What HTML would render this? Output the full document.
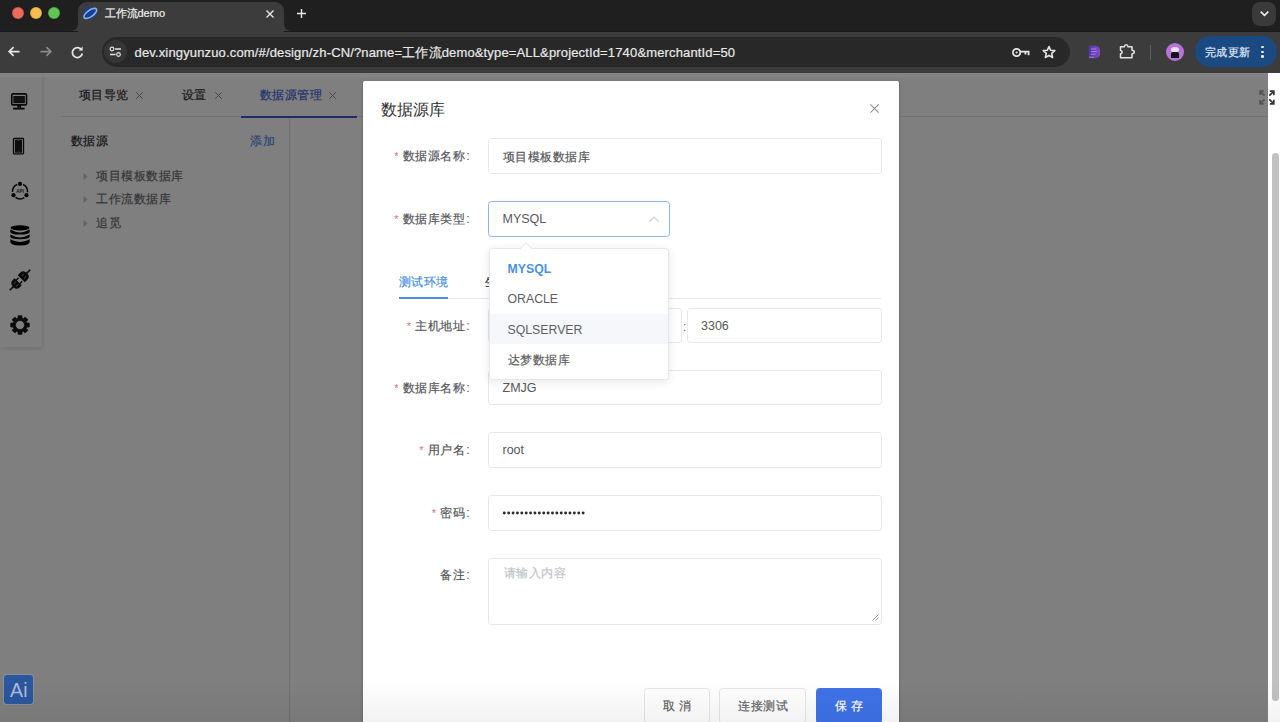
<!DOCTYPE html>
<html><head><meta charset="utf-8">
<style>
*{box-sizing:border-box;margin:0;padding:0}
html,body{width:1280px;height:722px;overflow:hidden;background:#fff;font-family:"Liberation Sans",sans-serif}
.abs{position:absolute}
.t{position:absolute;white-space:nowrap;line-height:1}
svg{position:absolute;overflow:visible}
#tabstrip{left:0;top:0;width:1280px;height:31px;background:#1f1f1f}
#toolbar{left:0;top:31px;width:1280px;height:42px;background:#3c3c3c;border-top:.5px solid #1a1a1a}
.tl{width:12px;height:12px;border-radius:50%;top:7.3px;box-shadow:inset 0 0 0 .6px rgba(0,0,0,.25)}
#tab{left:78px;top:1.5px;width:206px;height:31px;background:#3c3c3c;border-radius:9px 9px 0 0}
#omni{left:102px;top:37px;width:968px;height:30px;border-radius:15px;background:#282828}
#page{left:0;top:73px;width:1280px;height:649px;background:#fff;overflow:hidden}
#overlay{left:0;top:73px;width:1268px;height:649px;background:rgba(0,0,0,.5)}
.lbl{position:absolute;left:0;width:106.7px;text-align:right;white-space:nowrap;line-height:1;font-size:12.4px;color:#55575c}
.lbl i{font-style:normal;color:#d9707a;font-size:11px;margin-right:4.3px;vertical-align:top;position:relative;top:1px}
b{font-weight:normal;letter-spacing:.5px;-webkit-text-stroke:.2px currentColor}
.cj{font-size:12px;letter-spacing:.5px;-webkit-text-stroke:.2px currentColor}
u{text-decoration:none;margin-left:1px}
.inp{position:absolute;left:125px;width:393.5px;height:35.5px;border:1px solid #e5e7eb;border-radius:3.5px;background:#fff}
.val{position:absolute;left:139.5px;white-space:nowrap;line-height:1;font-size:12.4px;color:#55575c}
.lat{font-size:12.5px}
.opt{position:absolute;left:18px;white-space:nowrap;line-height:1;font-size:12.4px;color:#5c5e63}
.opt.lat{font-size:12.3px}
.btn{position:absolute;top:606.5px;height:36px;border:1px solid #e3e5ea;border-radius:3.5px;background:#fff}
</style></head><body>
<!-- ============ browser chrome ============ -->
<div id="tabstrip" class="abs"></div>
<div class="abs tl" style="left:11.5px;background:#ee6a5f"></div>
<div class="abs tl" style="left:29.5px;background:#f5bf4f"></div>
<div class="abs tl" style="left:47.5px;background:#61c554"></div>
<!-- tab flares -->
<div id="toolbar" class="abs"></div>
<div id="tab" class="abs"></div>
<svg style="left:70px;top:23px" width="8" height="8"><path d="M0 8 Q8 8 8 0 L8 8 Z" fill="#3c3c3c"/></svg>
<svg style="left:284px;top:23px" width="8" height="8"><path d="M8 8 Q0 8 0 0 L0 8 Z" fill="#3c3c3c"/></svg>
<!-- favicon -->
<svg style="left:82px;top:5px" width="16" height="16" viewBox="0 0 16 16">
  <circle cx="8" cy="8" r="6" fill="#1a3f8f"/>
  <ellipse cx="8" cy="8.5" rx="7.5" ry="3.2" transform="rotate(-35 8 8)" fill="none" stroke="#7fb1f5" stroke-width="1.6"/>
</svg>
<div class="t" style="left:104.5px;top:8px;font-size:11px;color:#f0f0f0;-webkit-text-stroke:.2px currentColor">工作流demo</div>
<svg style="left:265.5px;top:9.5px" width="8" height="8"><path d="M0.5 0.5L7.5 7.5M7.5 0.5L0.5 7.5" stroke="#e6e6e6" stroke-width="1.4"/></svg>
<svg style="left:296.5px;top:9px" width="9" height="9"><path d="M4.5 0V9M0 4.5H9" stroke="#e6e6e6" stroke-width="1.4"/></svg>
<!-- tab search -->
<div class="abs" style="left:1252px;top:2px;width:24px;height:23.5px;border-radius:8px;background:#3a3a3a"></div>
<svg style="left:1260px;top:10.5px" width="9" height="5"><path d="M0.7 0.7L4.5 4.3L8.3 0.7" fill="none" stroke="#eee" stroke-width="1.6"/></svg>
<!-- nav -->
<svg style="left:8px;top:46px" width="12" height="11"><path d="M11.5 5.5H1.4M5.6 1.1L1.2 5.5L5.6 9.9" fill="none" stroke="#e6e6e6" stroke-width="1.75"/></svg>
<svg style="left:40px;top:46px" width="12" height="11"><path d="M0.5 5.5H10.6M6.4 1.1L10.8 5.5L6.4 9.9" fill="none" stroke="#8a8a8a" stroke-width="1.75"/></svg>
<svg style="left:71px;top:45.5px" width="13" height="13"><path d="M10.8 4.2A5 5 0 1 0 11.3 7.5" fill="none" stroke="#e6e6e6" stroke-width="1.75"/><path d="M7.6 4.6H11.6V0.6Z" fill="#e3e3e3"/></svg>
<div id="omni" class="abs"></div>
<div class="abs" style="left:103.5px;top:40px;width:23px;height:23px;border-radius:50%;background:#353535"></div>
<svg style="left:109px;top:45.5px" width="13" height="12" viewBox="0 0 13 12"><circle cx="3" cy="3" r="1.8" fill="none" stroke="#e3e3e3" stroke-width="1.2"/><path d="M6 3H12M1 8.5H6.5" stroke="#e3e3e3" stroke-width="1.3"/><circle cx="9.5" cy="8.5" r="1.8" fill="none" stroke="#e3e3e3" stroke-width="1.2"/></svg>
<div class="t" style="left:134.5px;top:45.5px;font-size:13px;letter-spacing:0.15px;color:#e8e8e8;-webkit-text-stroke:.2px #e8e8e8">dev.xingyunzuo.com/#/design/zh-CN/?name=工作流demo&amp;type=ALL&amp;projectId=1740&amp;merchantId=50</div>
<!-- key -->
<svg style="left:1012px;top:46.5px" width="18" height="11" viewBox="0 0 18 11"><circle cx="4.6" cy="5.5" r="3.7" fill="none" stroke="#e6e6e6" stroke-width="1.8"/><circle cx="4.6" cy="5.5" r="1.1" fill="#e6e6e6"/><path d="M8.3 4.6H16.6V8.2M13.4 4.6V7.6" fill="none" stroke="#e6e6e6" stroke-width="1.8"/></svg>
<!-- star -->
<svg style="left:1042px;top:44.5px" width="14" height="14" viewBox="0 0 24 24"><path d="M12 2.5l2.9 6.6 7.1.6-5.4 4.7 1.6 7-6.2-3.7-6.2 3.7 1.6-7L2 9.7l7.1-.6z" fill="none" stroke="#e6e6e6" stroke-width="2.7" stroke-linejoin="round"/></svg>
<!-- purple ext -->
<svg style="left:1087.5px;top:44.5px" width="13" height="14" viewBox="0 0 13 14"><defs><linearGradient id="pg" x1="0" x2="1"><stop offset="0" stop-color="#4a3aa8"/><stop offset="1" stop-color="#8a48c8"/></linearGradient></defs><path d="M0.8 0.8H7.5Q12.2 0.8 12.2 7Q12.2 13.2 7.5 13.2H0.8Z" fill="url(#pg)"/><path d="M3 4H8.3M3 6.6H8.8M3 9.2H7.5M1 12.2H6" stroke="#b9a6ec" stroke-width="0.9" opacity=".8"/></svg>
<!-- puzzle -->
<svg style="left:1119px;top:43.5px" width="17" height="15" viewBox="0 0 17 15"><path d="M1.5 2.8H5.3Q5.6 0.8 7.2 0.8Q8.8 0.8 9.1 2.8H13V6.3Q15.3 6.6 15.3 8.1Q15.3 9.6 13 9.9V13.8H1.5V9.8Q3.2 9.5 3.2 8.2Q3.2 6.9 1.5 6.6Z" fill="none" stroke="#e3e3e3" stroke-width="1.5" stroke-linejoin="round"/></svg>
<div class="abs" style="left:1149.5px;top:44.5px;width:1.2px;height:15px;background:#5e5e5e"></div>
<!-- avatar -->
<div class="abs" style="left:1165.5px;top:42.5px;width:18.5px;height:18.5px;border-radius:50%;background:#b774d8"></div>
<div class="abs" style="left:1171px;top:47px;width:7.5px;height:5px;border-radius:50% 50% 40% 40%;background:#e8e0f0"></div>
<div class="abs" style="left:1171px;top:52px;width:7.5px;height:6px;border-radius:2px 2px 0 0;background:#151515"></div>
<!-- update pill -->
<div class="abs" style="left:1194.5px;top:36px;width:82px;height:30.5px;border-radius:15.25px;background:#1b4a82"></div>
<div class="t" style="left:1204.8px;top:46.5px;font-size:11px;letter-spacing:.55px;color:#e1ecfb;-webkit-text-stroke:.2px currentColor">完成更新</div>
<div class="abs" style="left:1261px;top:45.8px;width:2.6px;height:2.6px;border-radius:50%;background:#e1ecfb"></div>
<div class="abs" style="left:1261px;top:50.5px;width:2.6px;height:2.6px;border-radius:50%;background:#e1ecfb"></div>
<div class="abs" style="left:1261px;top:55.2px;width:2.6px;height:2.6px;border-radius:50%;background:#e1ecfb"></div>

<!-- ============ page ============ -->
<div id="page" class="abs">
  <!-- left icon sidebar -->
  <div class="abs" style="left:0;top:0;width:42px;height:273.7px;background:#fcfcfc;box-shadow:0 1px 5px rgba(0,0,0,.16)"></div>
  <!-- monitor -->
  <svg style="left:10px;top:19px" width="18" height="18" viewBox="0 0 18 18"><rect x="1.75" y="1.85" width="14.8" height="11" rx="1.2" fill="none" stroke="#111" stroke-width="1.6"/><rect x="3.3" y="4" width="11.6" height="7.2" fill="#222"/><path d="M8.2 12.8V15.8M10.1 12.8V15.8" stroke="#111" stroke-width="1.8"/><path d="M3.1 16.6H14.6" stroke="#111" stroke-width="1.9"/></svg>
  <!-- phone -->
  <svg style="left:12px;top:64px" width="13" height="18" viewBox="0 0 13 18"><rect x="1.5" y="1.4" width="10" height="15.5" rx="0.8" fill="none" stroke="#111" stroke-width="1.3"/><rect x="3" y="2.6" width="7" height="13.1" fill="#1a1a1a"/><path d="M5.2 3.3H7.8M5.2 14.9H7.8" stroke="#666" stroke-width="0.8"/></svg>
  <!-- api -->
  <svg style="left:10px;top:108px" width="20" height="20" viewBox="0 0 20 20"><circle cx="10" cy="10.4" r="7.5" fill="none" stroke="#111" stroke-width="1.5" stroke-dasharray="9.4 6.31" stroke-dashoffset="-3.15" transform="rotate(-90 10 10.4)"/><circle cx="10" cy="2.9" r="2.1" fill="#111"/><circle cx="3.5" cy="14.15" r="2.1" fill="#111"/><circle cx="16.5" cy="14.15" r="2.1" fill="#111"/><text x="10" y="12" font-size="4.6" text-anchor="middle" fill="#333" font-family="Liberation Sans" font-weight="bold">API</text></svg>
  <!-- database -->
  <svg style="left:10px;top:152px" width="20" height="21" viewBox="0 0 20 21"><ellipse cx="10" cy="2.8" rx="9.5" ry="2.6" fill="#000"/><path d="M0.3 4.6Q10 10.2 19.7 4.6V6.8Q19.7 9.6 10 9.6Q0.3 9.6 0.3 6.8Z" fill="#000"/><path d="M0.3 9.6Q10 15.2 19.7 9.6V11.5Q19.7 14.3 10 14.3Q0.3 14.3 0.3 11.5Z" fill="#000"/><path d="M0.3 14.2Q10 19.8 19.7 14.2V16.8Q19.7 20.4 10 20.4Q0.3 20.4 0.3 16.8Z" fill="#000"/></svg>
  <!-- plug -->
  <svg style="left:9px;top:196px" width="22" height="22" viewBox="-11 -11 22 22"><g transform="rotate(-45)"><path d="M-14.5 0H-8M8 0H14.5" stroke="#161616" stroke-width="1.6"/><path d="M1.8 -5H5.5Q9.8 -5 9.8 0Q9.8 5 5.5 5H1.8Z" fill="#161616"/><path d="M4 -1.7H7M4 1.7H7" stroke="#7a7a7a" stroke-width="1"/><path d="M-2.6 -5H-5.5Q-9.8 -5 -9.8 0Q-9.8 5 -5.5 5H-2.6Z" fill="#161616"/><path d="M-3 -2.5H0.6M-3 2.5H0.6" stroke="#161616" stroke-width="1.4"/><path d="M-7 -1.7H-4.3M-7 1.7H-4.3" stroke="#7a7a7a" stroke-width="1"/></g></svg>
  <!-- gear -->
  <svg style="left:10px;top:242px" width="20" height="20" viewBox="0 0 20 20"><path fill="#161616" stroke="#161616" stroke-width="0.7" stroke-linejoin="round" fill-rule="evenodd" d="M8.02 3.08 L8.02 0.71 L11.98 0.71 L11.98 3.08 L13.49 3.70 L15.17 2.03 L17.97 4.83 L16.30 6.51 L16.92 8.02 L19.29 8.02 L19.29 11.98 L16.92 11.98 L16.30 13.49 L17.97 15.17 L15.17 17.97 L13.49 16.30 L11.98 16.92 L11.98 19.29 L8.02 19.29 L8.02 16.92 L6.51 16.30 L4.83 17.97 L2.03 15.17 L3.70 13.49 L3.08 11.98 L0.71 11.98 L0.71 8.02 L3.08 8.02 L3.70 6.51 L2.03 4.83 L4.83 2.03 L6.51 3.70Z M14.50 10.00 A4.5 4.5 0 1 0 5.50 10.00 A4.5 4.5 0 1 0 14.50 10.00Z"/></svg>
  <!-- app tabs -->
  <div class="t" style="left:79px;top:16px;font-size:12px;letter-spacing:.4px;color:#303133;-webkit-text-stroke:.2px currentColor">项目导览</div>
  <svg style="left:136px;top:18.5px" width="7" height="7"><path d="M0.3 0.3L6.7 6.7M6.7 0.3L0.3 6.7" stroke="#8a8c90" stroke-width="1"/></svg>
  <div class="t" style="left:182px;top:16px;font-size:12px;letter-spacing:.4px;color:#303133;-webkit-text-stroke:.2px currentColor">设置</div>
  <svg style="left:214.5px;top:18.5px" width="7" height="7"><path d="M0.3 0.3L6.7 6.7M6.7 0.3L0.3 6.7" stroke="#8a8c90" stroke-width="1"/></svg>
  <div class="t" style="left:259.5px;top:16px;font-size:12px;letter-spacing:.5px;color:#4c66e0;-webkit-text-stroke:.2px currentColor">数据源管理</div>
  <svg style="left:329.3px;top:19px" width="7" height="7"><path d="M0.3 0.3L6.7 6.7M6.7 0.3L0.3 6.7" stroke="#8a8c90" stroke-width="1"/></svg>
  <div class="abs" style="left:61px;top:43px;width:1207px;height:1px;background:#e4e7ed"></div>
  <div class="abs" style="left:241px;top:43px;width:116px;height:2px;background:#3f53d9"></div>
  <!-- fullscreen icon -->
  <svg style="left:1258.5px;top:16.5px" width="16" height="15" viewBox="0 0 16 15"><path d="M1 5V1.2H4.8M1.3 1.5L5.5 5.7M1 10V13.8H4.8M1.3 13.5L5.5 9.3" fill="none" stroke="#aaa" stroke-width="1.8"/><path d="M10.8 1.2H14.8V5.2M14.5 1.5L10.3 5.7M14.8 9.8V13.8H10.8M14.5 13.5L10.3 9.3" fill="none" stroke="#333" stroke-width="1.7"/></svg>
  <!-- left panel -->
  <div class="t" style="left:71px;top:62px;font-size:12px;letter-spacing:.3px;color:#303133;-webkit-text-stroke:.2px currentColor">数据源</div>
  <div class="t" style="left:250px;top:62px;font-size:12px;letter-spacing:.9px;color:#4f93ea;-webkit-text-stroke:.2px currentColor">添加</div>
  <svg style="left:82.5px;top:99.5px" width="5" height="7"><path d="M0.5 0L4.5 3.5L0.5 7Z" fill="#c0c4cc"/></svg>
  <svg style="left:82.5px;top:123px" width="5" height="7"><path d="M0.5 0L4.5 3.5L0.5 7Z" fill="#c0c4cc"/></svg>
  <svg style="left:82.5px;top:146.5px" width="5" height="7"><path d="M0.5 0L4.5 3.5L0.5 7Z" fill="#c0c4cc"/></svg>
  <div class="t" style="left:96px;top:97px;font-size:12px;letter-spacing:.55px;color:#6c6e73;-webkit-text-stroke:.2px currentColor">项目模板数据库</div>
  <div class="t" style="left:96px;top:120px;font-size:12px;letter-spacing:.55px;color:#6c6e73;-webkit-text-stroke:.2px currentColor">工作流数据库</div>
  <div class="t" style="left:96px;top:144px;font-size:12px;letter-spacing:.55px;color:#6c6e73;-webkit-text-stroke:.2px currentColor">追觅</div>
  <div class="abs" style="left:289px;top:45px;width:1px;height:604px;background:#dcdfe6"></div>
</div>
<div id="overlay" class="abs"></div>
<div class="abs" style="left:0;top:73px;width:1268px;height:5px;background:rgba(255,255,255,.035);border-bottom:1px solid rgba(0,0,0,.02)"></div>
<!-- scrollbar thumb -->
<div class="abs" style="left:1272px;top:153px;width:7px;height:548px;border-radius:3.5px;background:#c1c1c1"></div>

<!-- ============ modal ============ -->
<div id="modal" class="abs" style="left:363px;top:81px;width:536px;height:700px;background:#fff;border-radius:2px;box-shadow:0 1px 3px rgba(0,0,0,.3)">
  <div class="t" style="left:18px;top:21px;font-size:16px;color:#303133;letter-spacing:.1px">数据源库</div>
  <svg style="left:507px;top:23.3px" width="9" height="9"><path d="M0.4 0.4L8.6 8.6M8.6 0.4L0.4 8.6" stroke="#909399" stroke-width="1.1"/></svg>

  <!-- row1 -->
  <div class="lbl" style="top:69px"><i>*</i><b>数据源名称</b><u>:</u></div>
  <div class="inp" style="top:57px"></div>
  <div class="val" style="top:69.5px"><b>项目模板数据库</b></div>

  <!-- row2 -->
  <div class="lbl" style="top:132px"><i>*</i><b>数据库类型</b><u>:</u></div>
  <div class="inp" style="top:120px;width:181.5px;border-color:#8ab4ea"></div>
  <div class="val lat" style="top:132px">MYSQL</div>
  <svg style="left:285.5px;top:135px" width="10" height="6"><path d="M0.5 5.5L5 1L9.5 5.5" fill="none" stroke="#cdd0d6" stroke-width="1.1"/></svg>

  <!-- tabs -->
  <div class="t cj" style="left:35.5px;top:195px;color:#4a90e2">测试环境</div>
  <div class="t cj" style="left:121.5px;top:195px;color:#303133">生产环境</div>
  <div class="abs" style="left:35.5px;top:216.5px;width:482.5px;height:1.5px;background:#e4e7ed"></div>
  <div class="abs" style="left:35.5px;top:216px;width:49.5px;height:2.2px;background:#4a90e2"></div>

  <!-- row3 -->
  <div class="lbl" style="top:239px"><i>*</i><b>主机地址</b><u>:</u></div>
  <div class="inp" style="top:226.5px;width:193.5px"></div>
  <div class="t" style="left:320px;top:239.5px;font-size:12px;color:#606266">:</div>
  <div class="inp" style="left:323.5px;top:226.5px;width:195px"></div>
  <div class="val lat" style="left:338px;top:238.5px">3306</div>

  <!-- row4 -->
  <div class="lbl" style="top:301px"><i>*</i><b>数据库名称</b><u>:</u></div>
  <div class="inp" style="top:288.5px"></div>
  <div class="val lat" style="top:300.5px">ZMJG</div>

  <!-- row5 -->
  <div class="lbl" style="top:363px"><i>*</i><b>用户名</b><u>:</u></div>
  <div class="inp" style="top:351px"></div>
  <div class="val lat" style="top:363px">root</div>

  <!-- row6 -->
  <div class="lbl" style="top:426px"><i>*</i><b>密码</b><u>:</u></div>
  <div class="inp" style="top:414px"></div>
  <svg style="left:140px;top:429.6px" width="84" height="4"><circle cx="1.30" cy="2" r="1.45" fill="#2a2a2a"/><circle cx="5.68" cy="2" r="1.45" fill="#2a2a2a"/><circle cx="10.06" cy="2" r="1.45" fill="#2a2a2a"/><circle cx="14.44" cy="2" r="1.45" fill="#2a2a2a"/><circle cx="18.82" cy="2" r="1.45" fill="#2a2a2a"/><circle cx="23.20" cy="2" r="1.45" fill="#2a2a2a"/><circle cx="27.58" cy="2" r="1.45" fill="#2a2a2a"/><circle cx="31.96" cy="2" r="1.45" fill="#2a2a2a"/><circle cx="36.34" cy="2" r="1.45" fill="#2a2a2a"/><circle cx="40.72" cy="2" r="1.45" fill="#2a2a2a"/><circle cx="45.10" cy="2" r="1.45" fill="#2a2a2a"/><circle cx="49.48" cy="2" r="1.45" fill="#2a2a2a"/><circle cx="53.86" cy="2" r="1.45" fill="#2a2a2a"/><circle cx="58.24" cy="2" r="1.45" fill="#2a2a2a"/><circle cx="62.62" cy="2" r="1.45" fill="#2a2a2a"/><circle cx="67.00" cy="2" r="1.45" fill="#2a2a2a"/><circle cx="71.38" cy="2" r="1.45" fill="#2a2a2a"/><circle cx="75.76" cy="2" r="1.45" fill="#2a2a2a"/><circle cx="80.14" cy="2" r="1.45" fill="#2a2a2a"/></svg>

  <!-- row7 -->
  <div class="lbl" style="top:488px"><b>备注</b><u>:</u></div>
  <div class="inp" style="top:476.5px;height:67px"></div>
  <div class="val" style="left:140.5px;top:485.5px;color:#c0c4cc"><b>请输入内容</b></div>
  <svg style="left:509px;top:533px" width="7" height="7"><path d="M6.5 0.5L0.5 6.5M6.5 3.5L3.5 6.5" stroke="#888" stroke-width="0.9"/></svg>

  <!-- buttons -->
  <div class="btn" style="left:281px;width:66px"></div>
  <div class="t cj" style="left:300px;top:619px;color:#606266;letter-spacing:4px">取消</div>
  <div class="btn" style="left:356px;width:87px"></div>
  <div class="t cj" style="left:375px;top:619px;color:#606266">连接测试</div>
  <div class="btn" style="left:452.5px;width:66px;background:#3f72e8;border-color:#3f72e8"></div>
  <div class="t cj" style="left:471.5px;top:619px;color:#fff;letter-spacing:4px">保存</div>

  <!-- dropdown -->
  <div class="abs" style="left:125.5px;top:167px;width:180.5px;height:132px;background:#fff;border:1px solid #e4e7ed;border-radius:3.5px;box-shadow:0 2px 10px rgba(0,0,0,.1)">
    <svg style="left:30px;top:-6px" width="12" height="6"><path d="M0 6L6 0L12 6Z" fill="#fff"/><path d="M0 6L6 0L12 6" fill="none" stroke="#e4e7ed"/></svg>
    <div class="opt lat" style="top:14px;color:#4a90e2;font-weight:bold">MYSQL</div>
    <div class="opt lat" style="top:44px">ORACLE</div>
    <div class="abs" style="left:0;top:65px;width:178.5px;height:30px;background:#f5f7fa"></div>
    <div class="opt lat" style="top:75px">SQLSERVER</div>
    <div class="opt" style="top:104.5px"><b>达梦数据库</b></div>
  </div>
</div>
<!-- Ai badge -->
<div class="abs" style="left:3.8px;top:675px;width:29px;height:29px;border-radius:3px;background:#2b579f;box-shadow:0 0 0 1px rgba(160,175,200,.35)"></div>
<div class="t" style="left:10px;top:680.5px;font-size:19.5px;color:#acbcd8;letter-spacing:.3px">Ai</div>
<!-- bottom shade -->
<div class="abs" style="left:0;top:680px;width:1280px;height:42px;background:linear-gradient(rgba(0,0,0,0),rgba(0,0,0,.05))"></div>
</body></html>
